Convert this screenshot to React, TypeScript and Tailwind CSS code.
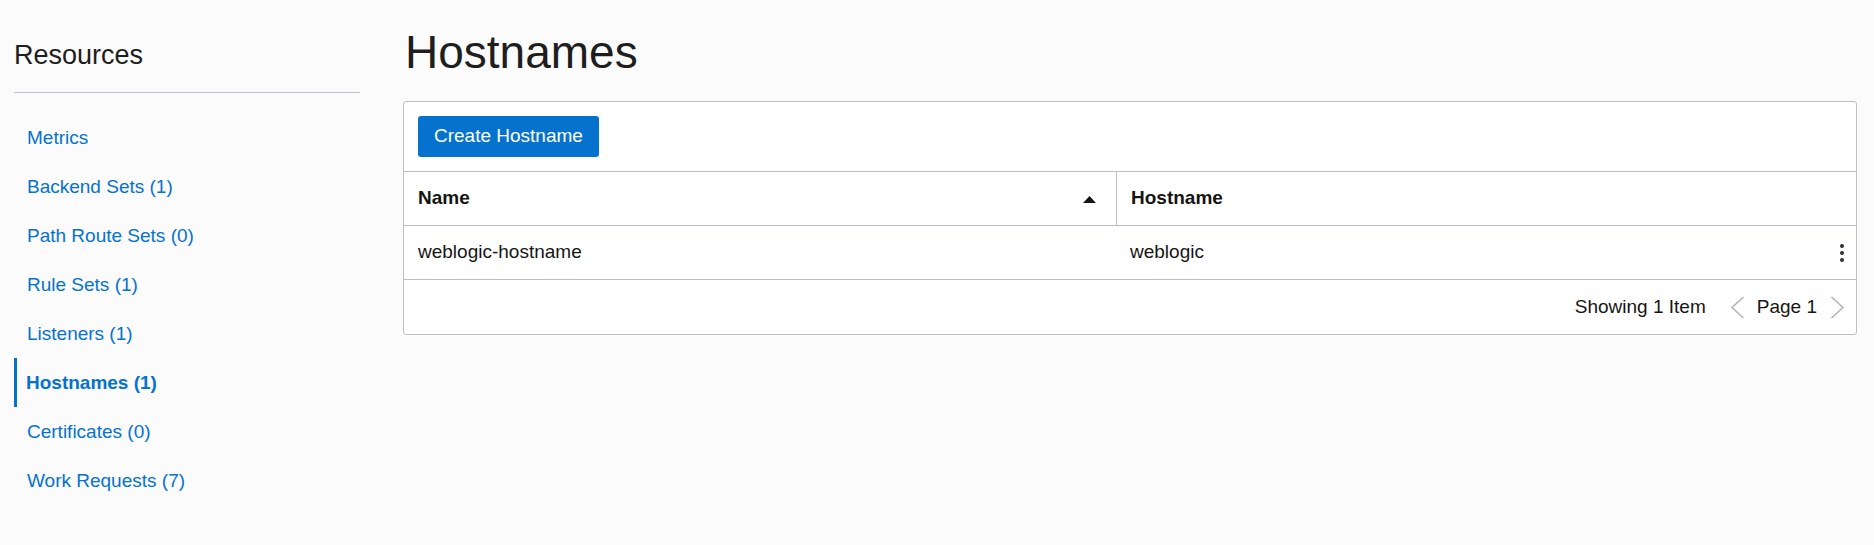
const navItems = [
  { label: 'Metrics' },
  { label: 'Backend Sets (1)' },
  { label: 'Path Route Sets (0)' },
  { label: 'Rule Sets (1)' },
  { label: 'Listeners (1)' },
  { label: 'Hostnames (1)', active: true },
  { label: 'Certificates (0)' },
  { label: 'Work Requests (7)' },
]

function Chevron({ dir }: { dir: 'left' | 'right' }) {
  return (
    <svg width="15" height="23" viewBox="0 0 15 23" className="block">
      <path
        d={dir === 'left' ? 'M13.5 1 L2 11.5 L13.5 22' : 'M1.5 1 L13 11.5 L1.5 22'}
        fill="none"
        stroke="#b4b4b4"
        strokeWidth="1.6"
      />
    </svg>
  )
}

export default function App() {
  return (
    <div className="flex min-h-[545px] w-full bg-[#fbfbfb] font-['Liberation_Sans',Arial,sans-serif] text-[#161513]">
      {/* sidebar */}
      <aside className="ml-[14px] w-[346px] shrink-0 pt-[39px]">
        <h2 className="text-[27px] leading-[32px] font-normal text-[#1e1e1e]">Resources</h2>
        <div className="mt-[21px] h-px bg-[#bfc2c8]" />
        <nav className="mt-[20px] flex flex-col">
          {navItems.map((item) => (
            <a
              key={item.label}
              href="#"
              className={
                item.active
                  ? 'flex h-[49px] items-center border-l-[3px] border-[#0572ce] pl-[9px] text-[19px] leading-[49px] font-bold text-[#0572ce]'
                  : 'flex h-[49px] items-center pl-[13px] text-[19px] leading-[49px] text-[#0572ce]'
              }
            >
              {item.label}
            </a>
          ))}
        </nav>
      </aside>

      {/* main */}
      <main className="ml-[43px] mr-[17px] flex-1 pt-[25px]">
        <h1 className="ml-[2px] text-[46px] leading-[55px] font-normal text-[#1e1e1e]">Hostnames</h1>

        <div className="mt-[21px] rounded-[3px] border border-[#bcbec4] bg-white">
          <div className="p-[14px]">
            <button className="h-[41px] rounded-[3px] bg-[#0572ce] px-[16px] text-[19px] text-white">
              Create Hostname
            </button>
          </div>

          <div className="grid grid-cols-[713px_1fr] border-t border-[#bcbec4]">
            <div className="flex h-[53px] items-center justify-between border-r border-[#bcbec4] pl-[14px] pr-[20px]">
              <span className="text-[19px] font-bold">Name</span>
              <svg width="13" height="7" viewBox="0 0 13 7" className="mt-[2px] block">
                <path d="M0 7 L6.5 0 L13 7 Z" fill="#161513" />
              </svg>
            </div>
            <div className="flex h-[53px] items-center pl-[14px]">
              <span className="text-[19px] font-bold">Hostname</span>
            </div>
          </div>

          <div className="grid grid-cols-[713px_1fr] border-t border-[#bcbec4]">
            <div className="flex h-[53px] items-center pl-[14px] text-[19px]">weblogic-hostname</div>
            <div className="flex h-[53px] items-center justify-between pl-[13px] pr-[12px] text-[19px]">
              <span>weblogic</span>
              <span className="flex flex-col items-center gap-[3px]">
                <span className="h-[4px] w-[4px] rounded-full bg-[#2f2f2f]" />
                <span className="h-[4px] w-[4px] rounded-full bg-[#2f2f2f]" />
                <span className="h-[4px] w-[4px] rounded-full bg-[#2f2f2f]" />
              </span>
            </div>
          </div>

          <div className="flex h-[55px] items-center justify-end border-t border-[#bcbec4] pr-[11px] text-[19px]">
            <span>Showing 1 Item</span>
            <span className="ml-[24px]">
              <Chevron dir="left" />
            </span>
            <span className="ml-[12px]">Page 1</span>
            <span className="ml-[13px]">
              <Chevron dir="right" />
            </span>
          </div>
        </div>
      </main>
    </div>
  )
}
